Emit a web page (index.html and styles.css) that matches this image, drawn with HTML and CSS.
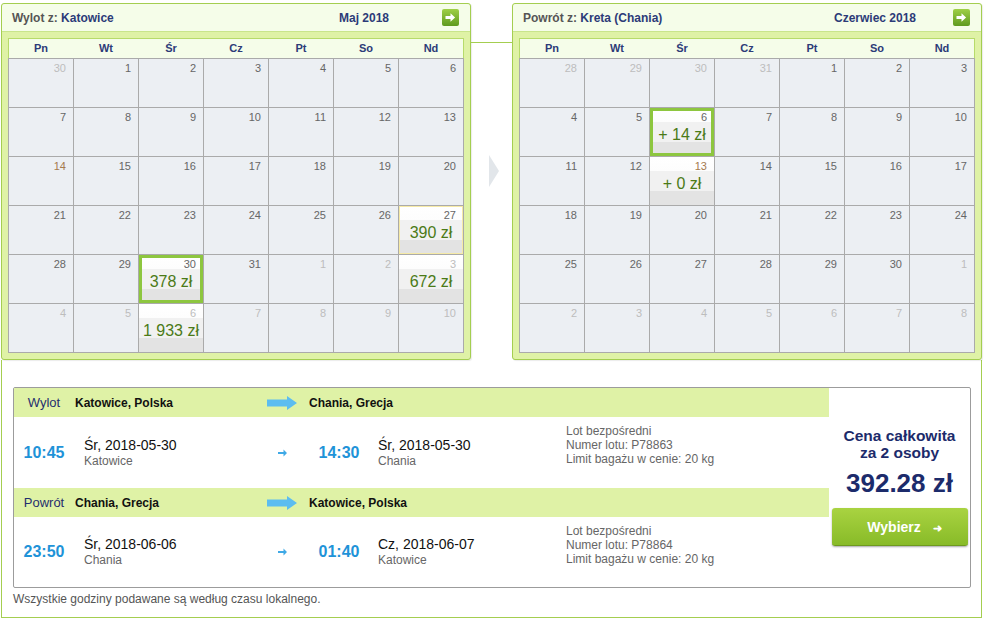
FILE: index.html
```html
<!DOCTYPE html>
<html lang="pl">
<head>
  <meta charset="UTF-8">
  <title>Wybór lotu</title>
  <link rel="stylesheet" href="styles.css">
</head>
<body>
  <div class="page">
    <div class="calendars">
      <!-- Outbound calendar -->
      <div class="cal">
        <div class="cal-top">
          <div class="cal-title"><span class="muted">Wylot z:</span> Katowice</div>
          <div class="cal-month">Maj 2018</div>
          <svg class="next" width="17" height="17" viewBox="0 0 17 17">
            <defs>
              <linearGradient id="ng1" x1="0" y1="0" x2="0" y2="1">
                <stop offset="0" stop-color="#9fd046"/>
                <stop offset="1" stop-color="#5f9a1f"/>
              </linearGradient>
            </defs>
            <rect width="17" height="17" rx="2" fill="url(#ng1)"/>
            <path d="M3.5 7h5V4.2l4.6 4.3-4.6 4.3V10h-5z" fill="#fff"/>
          </svg>
        </div>
        <div class="cal-body">
          <div class="cal-days">
            <span>Pn</span><span>Wt</span><span>Śr</span><span>Cz</span><span>Pt</span><span>So</span><span>Nd</span>
          </div>
          <div class="cal-grid">
            <div class="day other">30</div><div class="day">1</div><div class="day">2</div><div class="day">3</div><div class="day">4</div><div class="day">5</div><div class="day">6</div>
            <div class="day">7</div><div class="day">8</div><div class="day">9</div><div class="day">10</div><div class="day">11</div><div class="day">12</div><div class="day">13</div>
            <div class="day hol">14</div><div class="day">15</div><div class="day">16</div><div class="day">17</div><div class="day">18</div><div class="day">19</div><div class="day">20</div>
            <div class="day">21</div><div class="day">22</div><div class="day">23</div><div class="day">24</div><div class="day">25</div><div class="day">26</div>
            <div class="day priced hover">27<div class="price">390 zł</div></div>
            <div class="day">28</div><div class="day">29</div>
            <div class="day priced selected">30<div class="price">378 zł</div></div>
            <div class="day">31</div><div class="day other">1</div><div class="day other">2</div>
            <div class="day priced other">3<div class="price">672 zł</div></div>
            <div class="day other">4</div><div class="day other">5</div>
            <div class="day priced other">6<div class="price">1 933 zł</div></div>
            <div class="day other">7</div><div class="day other">8</div><div class="day other">9</div><div class="day other">10</div>
          </div>
        </div>
      </div>

      <div class="cal-gap">
        <div class="connector"></div>
        <div class="gap-arrow"></div>
      </div>

      <!-- Return calendar -->
      <div class="cal">
        <div class="cal-top">
          <div class="cal-title"><span class="muted">Powrót z:</span> Kreta (Chania)</div>
          <div class="cal-month">Czerwiec 2018</div>
          <svg class="next" width="17" height="17" viewBox="0 0 17 17">
            <defs>
              <linearGradient id="ng2" x1="0" y1="0" x2="0" y2="1">
                <stop offset="0" stop-color="#9fd046"/>
                <stop offset="1" stop-color="#5f9a1f"/>
              </linearGradient>
            </defs>
            <rect width="17" height="17" rx="2" fill="url(#ng2)"/>
            <path d="M3.5 7h5V4.2l4.6 4.3-4.6 4.3V10h-5z" fill="#fff"/>
          </svg>
        </div>
        <div class="cal-body">
          <div class="cal-days">
            <span>Pn</span><span>Wt</span><span>Śr</span><span>Cz</span><span>Pt</span><span>So</span><span>Nd</span>
          </div>
          <div class="cal-grid">
            <div class="day other">28</div><div class="day other">29</div><div class="day other">30</div><div class="day other">31</div><div class="day">1</div><div class="day">2</div><div class="day">3</div>
            <div class="day">4</div><div class="day">5</div>
            <div class="day priced selected">6<div class="price">+ 14 zł</div></div>
            <div class="day">7</div><div class="day">8</div><div class="day">9</div><div class="day">10</div>
            <div class="day">11</div><div class="day">12</div>
            <div class="day priced hol">13<div class="price">+ 0 zł</div></div>
            <div class="day">14</div><div class="day">15</div><div class="day">16</div><div class="day">17</div>
            <div class="day">18</div><div class="day">19</div><div class="day">20</div><div class="day">21</div><div class="day">22</div><div class="day">23</div><div class="day">24</div>
            <div class="day">25</div><div class="day">26</div><div class="day">27</div><div class="day">28</div><div class="day">29</div><div class="day">30</div><div class="day other">1</div>
            <div class="day other">2</div><div class="day other">3</div><div class="day other">4</div><div class="day other">5</div><div class="day other">6</div><div class="day other">7</div><div class="day other">8</div>
          </div>
        </div>
      </div>
    </div>

    <!-- Flight details -->
    <div class="details">
      <div class="trip">
        <div class="legs">
          <div class="leg-head">
            <span class="leg-label">Wylot</span>
            <span class="route">Katowice, Polska</span>
            <svg class="big-arrow" width="30" height="14" viewBox="0 0 30 14"><path d="M0 3.5h20V0l10 7-10 7v-3.5H0z" fill="#5cbdf0"/></svg>
            <span></span>
            <span class="route to">Chania, Grecja</span>
          </div>
          <div class="leg-body">
            <span class="time">10:45</span>
            <div class="when">
              <div class="date">Śr, 2018-05-30</div>
              <div class="city">Katowice</div>
            </div>
            <svg class="small-arrow" width="9" height="8" viewBox="0 0 9 8"><path d="M0 3h5.5V0.5L9 4 5.5 7.5V5H0z" fill="#3fa9e6"/></svg>
            <span></span>
            <span class="time">14:30</span>
            <div class="when arr">
              <div class="date">Śr, 2018-05-30</div>
              <div class="city">Chania</div>
            </div>
            <div class="info">
              <div>Lot bezpośredni</div>
              <div>Numer lotu: P78863</div>
              <div>Limit bagażu w cenie: 20 kg</div>
            </div>
          </div>
          <div class="leg-head">
            <span class="leg-label">Powrót</span>
            <span class="route">Chania, Grecja</span>
            <svg class="big-arrow" width="30" height="14" viewBox="0 0 30 14"><path d="M0 3.5h20V0l10 7-10 7v-3.5H0z" fill="#5cbdf0"/></svg>
            <span></span>
            <span class="route to">Katowice, Polska</span>
          </div>
          <div class="leg-body last">
            <span class="time">23:50</span>
            <div class="when">
              <div class="date">Śr, 2018-06-06</div>
              <div class="city">Chania</div>
            </div>
            <svg class="small-arrow" width="9" height="8" viewBox="0 0 9 8"><path d="M0 3h5.5V0.5L9 4 5.5 7.5V5H0z" fill="#3fa9e6"/></svg>
            <span></span>
            <span class="time">01:40</span>
            <div class="when arr">
              <div class="date">Cz, 2018-06-07</div>
              <div class="city">Katowice</div>
            </div>
            <div class="info">
              <div>Lot bezpośredni</div>
              <div>Numer lotu: P78864</div>
              <div>Limit bagażu w cenie: 20 kg</div>
            </div>
          </div>
        </div>

        <div class="summary">
          <div class="total-label">Cena całkowita<br>za 2 osoby</div>
          <div class="total">392.28 zł</div>
          <button class="choose">Wybierz <span class="choose-arrow">&#10140;</span></button>
        </div>
      </div>
      <p class="note">Wszystkie godziny podawane są według czasu lokalnego.</p>
    </div>
  </div>
</body>
</html>
```

FILE: styles.css
```css
body {
  margin: 0;
  font-family: "Liberation Sans", Arial, sans-serif;
  background: #fff;
  color: #222;
}

.page {
  width: 981px;
  margin-left: 1px;
  padding-top: 3px;
}

/* Calendars */
.calendars {
  display: flex;
}

.cal {
  width: 470px;
  box-sizing: border-box;
  border: 1px solid #a4ce50;
  border-radius: 3px;
  background: #dff2a6;
  box-shadow: 1px 1px 1px rgba(0, 0, 0, 0.08);
}

.cal-top {
  height: 27px;
  display: flex;
  align-items: center;
  padding: 0 11px 0 10px;
  background: #f5fde9;
  border-bottom: 1px solid #c9e58b;
  border-radius: 3px 3px 0 0;
  font-size: 12px;
  font-weight: bold;
  color: #2c3b78;
}

.cal-title {
  flex: 1;
}

.muted {
  color: #555;
}

.cal-month {
  width: 100px;
  text-align: center;
  margin-right: 28px;
}

.next {
  display: block;
}

.cal-body {
  padding: 6px;
}

.cal-days {
  display: grid;
  grid-template-columns: repeat(7, 64px);
  column-gap: 1px;
  height: 19px;
  line-height: 19px;
  border: 1px solid #b7db6b;
  border-bottom: none;
  background: #f5fde9;
  text-align: center;
  font-size: 11px;
  font-weight: bold;
  color: #2c3b78;
}

.cal-grid {
  display: grid;
  grid-template-columns: repeat(7, 64px);
  grid-auto-rows: 48px;
  gap: 1px;
  border: 1px solid #aaa;
  background: #aaa;
}

.day {
  background: #eceff3;
  padding: 3px 7px 0 0;
  text-align: right;
  font-size: 11px;
  line-height: 12px;
  color: #666;
}

.day.other {
  color: #bdbdbd;
}

.day.hol {
  color: #a57a4e;
}

.day.priced {
  background: linear-gradient(#fff 0, #fdfdfd 14px, #f1f1f1 14px, #f1f1f1 34px, #e3e3e3 34px);
}

.day.selected {
  box-shadow: inset 0 0 0 3px #8dc63f;
}

.day.hover {
  box-shadow: inset 0 0 0 1px #f6eaa6;
}

.price {
  margin: 3px -7px 0 0;
  text-align: center;
  font-size: 16px;
  line-height: 18px;
  color: #4b7a17;
}

.cal-gap {
  flex: 1;
  display: flex;
  flex-direction: column;
}

.connector {
  margin-top: 39px;
  border-top: 1px solid #a4ce50;
}

.gap-arrow {
  width: 0;
  height: 0;
  margin: 112px 0 0 18px;
  border-left: 10px solid #e2e6ea;
  border-top: 16px solid transparent;
  border-bottom: 16px solid transparent;
}

/* Flight details */
.details {
  border: 1px solid #a4ce50;
  border-top: none;
  padding: 27px 10px 11px 11px;
}

.trip {
  display: flex;
  border: 1px solid #9c9c9c;
  border-radius: 2px;
  background: #fff;
}

.legs {
  width: 815px;
}

.leg-head,
.leg-body {
  display: grid;
  grid-template-columns: 60px 193px 30px 12px 60px 197px 1fr;
  align-items: center;
}

.leg-head {
  height: 29px;
  background: #dff2a6;
  font-size: 12px;
}

.leg-label {
  text-align: center;
  font-size: 13px;
  color: #1f2f6e;
}

.route {
  padding-left: 1px;
  font-weight: bold;
  color: #111;
}

.route.to {
  grid-column: 5 / span 2;
  padding-left: 0;
}

.big-arrow {
  display: block;
}

.leg-body {
  height: 71px;
}

.leg-body.last {
  height: 70px;
}

.time {
  text-align: center;
  font-size: 16px;
  font-weight: bold;
  color: #1f93d8;
}

.when {
  padding-left: 10px;
}

.when.arr {
  padding-left: 9px;
}

.date {
  font-size: 14px;
  line-height: 17px;
  color: #111;
}

.city {
  font-size: 12px;
  line-height: 15px;
  color: #666;
}

.small-arrow {
  display: block;
  margin-left: 11px;
}

.info {
  align-self: start;
  padding-top: 7px;
  font-size: 12px;
  line-height: 14px;
  color: #666;
}

.summary {
  flex: 1;
  display: flex;
  flex-direction: column;
  align-items: center;
  padding-top: 39px;
}

.total-label {
  text-align: center;
  font-size: 15.5px;
  line-height: 17px;
  font-weight: bold;
  color: #1c2b6b;
}

.total {
  margin-top: 7px;
  font-size: 26px;
  line-height: 30px;
  font-weight: bold;
  color: #1c2b6b;
}

.choose {
  margin-top: 10px;
  width: 136px;
  height: 38px;
  border: none;
  border-bottom: 1px solid #6e9a1e;
  border-radius: 3px;
  background: linear-gradient(#a9d341, #88bb28);
  box-shadow: 0 1px 2px rgba(0, 0, 0, 0.35);
  color: #fff;
  font-family: "Liberation Sans", Arial, sans-serif;
  font-size: 14px;
  font-weight: bold;
  padding: 0 0 0 10px;
  cursor: pointer;
}

.choose-arrow {
  margin-left: 8px;
  font-size: 11px;
}

.note {
  margin: 4px 0 0;
  font-size: 12px;
  line-height: 14px;
  color: #555;
}
```
